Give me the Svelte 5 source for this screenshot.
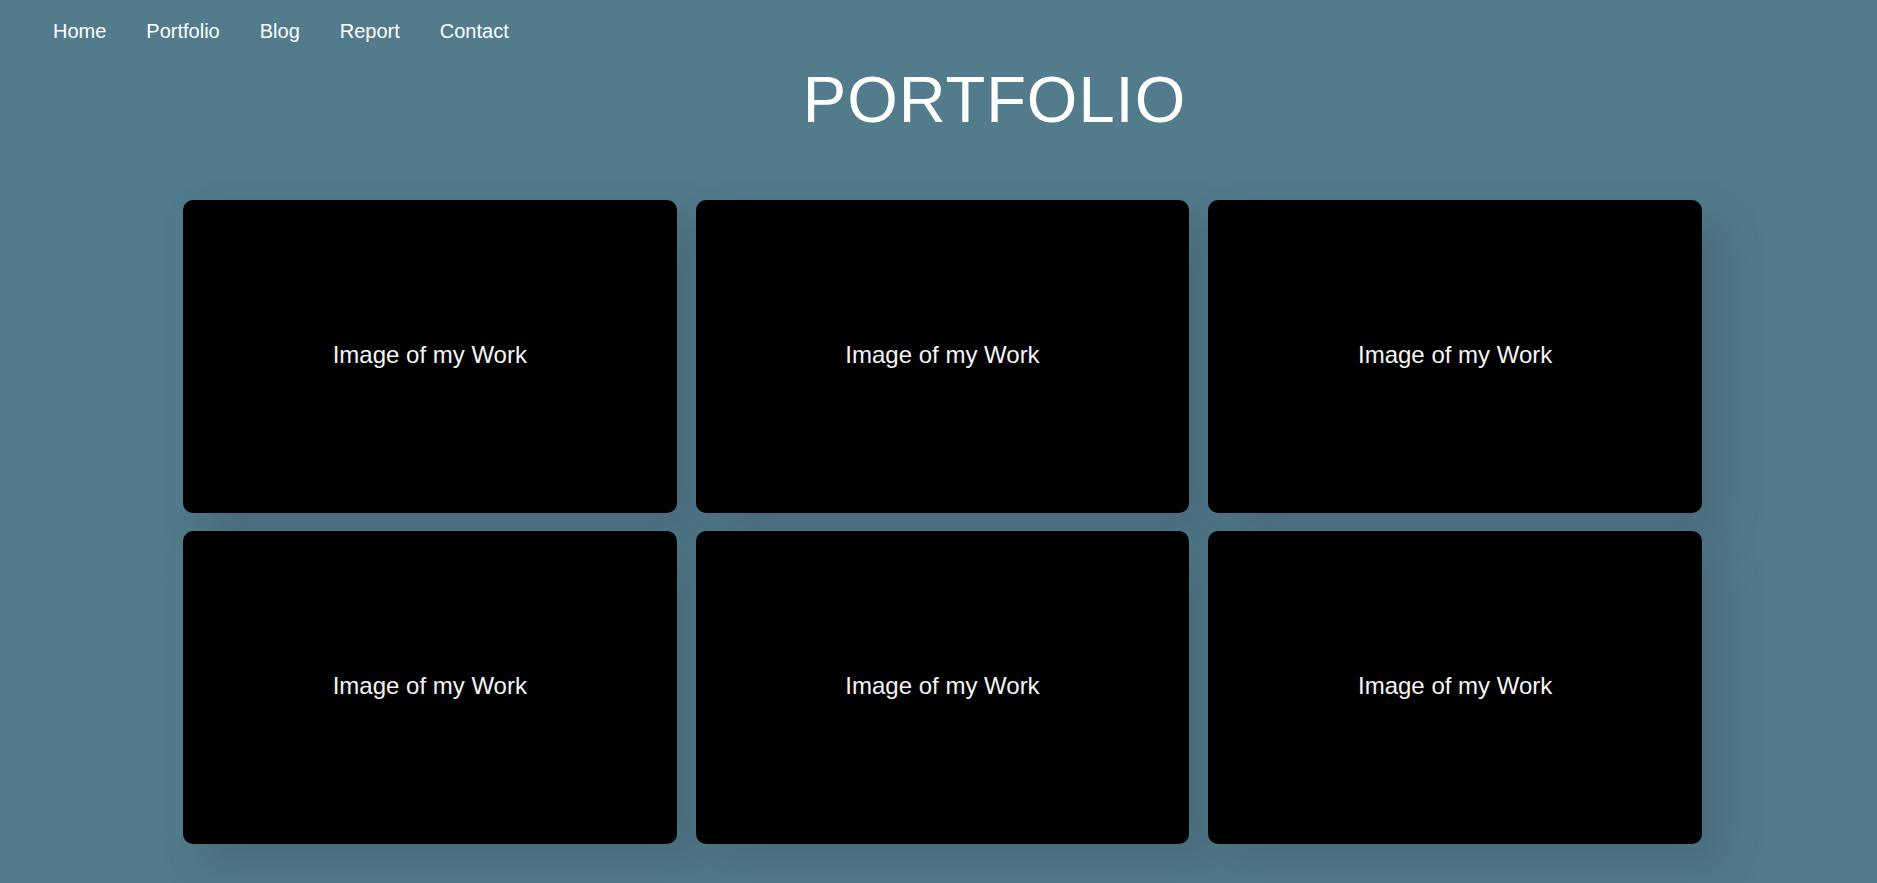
<script>
  const links = ['Home', 'Portfolio', 'Blog', 'Report', 'Contact'];
  const works = Array.from({ length: 6 }, (_, id) => ({ id, label: 'Image of my Work' }));
</script>

<header>
  <nav aria-label="Main">
    {#each links as link}
      <a href={'#' + link.toLowerCase()}>{link}</a>
    {/each}
  </nav>
</header>

<main>
  <h1>PORTFOLIO</h1>
  <section class="gallery">
    {#each works as work (work.id)}
      <article class="card"><p>{work.label}</p></article>
    {/each}
  </section>
</main>

<style>
  :global(body) {
    background: #527b8b;
    color: #fff;
    font-family: Arial, 'Liberation Sans', sans-serif;
  }

  nav {
    display: flex;
    gap: 40px;
    padding: 19px 53px 0;
  }

  a {
    color: #fff;
    font-size: 20px;
    line-height: 24px;
    text-decoration: none;
  }

  h1 {
    margin: 21px 0 0;
    padding-left: 112px;
    font-size: 65px;
    font-weight: 400;
    line-height: 72px;
    letter-spacing: 1px;
    text-align: center;
  }

  .gallery {
    display: grid;
    grid-template-columns: repeat(3, 1fr);
    gap: 18px 19px;
    margin: 64px 0 0;
    padding: 0 175px 39px 183px;
  }

  .card {
    display: grid;
    place-items: center;
    height: 313px;
    border-radius: 10px;
    background: #000;
    box-shadow: 20px 20px 40px rgba(52, 73, 94, 0.3);
  }

  p {
    margin: 0;
    padding-bottom: 4px;
    color: #f5f5f5;
    font-size: 24px;
    line-height: 28px;
  }
</style>
